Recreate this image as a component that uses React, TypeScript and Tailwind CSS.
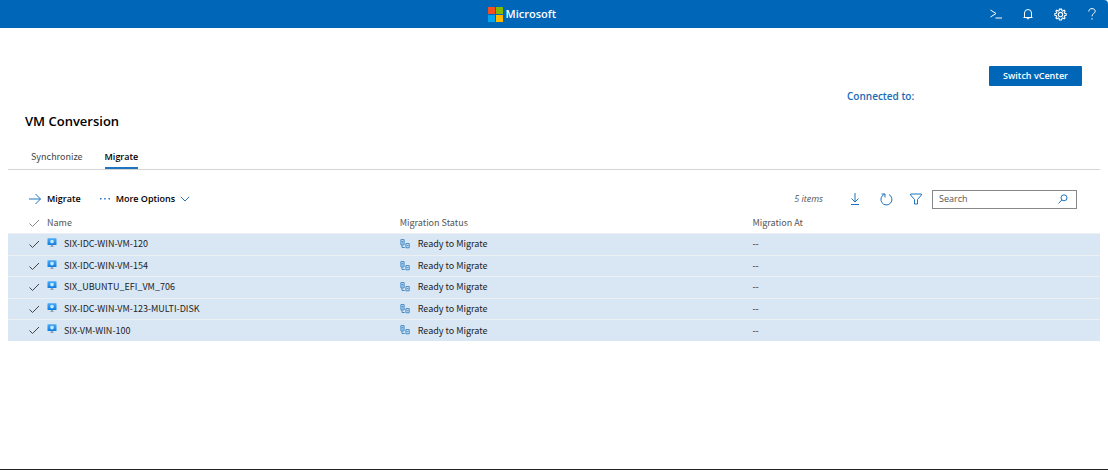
import { useState } from 'react';
import type { ReactNode } from 'react';

const machines = [
  'SIX-IDC-WIN-VM-120',
  'SIX-IDC-WIN-VM-154',
  'SIX_UBUNTU_EFI_VM_706',
  'SIX-IDC-WIN-VM-123-MULTI-DISK',
  'SIX-VM-WIN-100',
];

function Line({ className, box = '0 0 16 16', width = 1, children }: { className: string; box?: string; width?: number; children: ReactNode }) {
  return (
    <svg viewBox={box} className={className} fill="none" stroke="currentColor" strokeWidth={width} aria-hidden="true">
      {children}
    </svg>
  );
}

function MicrosoftLogo() {
  return (
    <svg viewBox="0 0 15 15" className="size-[15px]" aria-hidden="true">
      <path fill="#f25022" d="M0 0h7v7H0z" />
      <path fill="#7fba00" d="M8 0h7v7H8z" />
      <path fill="#00a4ef" d="M0 8h7v7H0z" />
      <path fill="#ffb900" d="M8 8h7v7H8z" />
    </svg>
  );
}

function MachineIcon() {
  return (
    <svg viewBox="0 0 10 10" className="mb-[2px] size-[10px] shrink-0" aria-hidden="true">
      <defs>
        <linearGradient id="screen" x1="0" y1="1" x2="0" y2="0">
          <stop offset="0" stopColor="#0f7ee0" />
          <stop offset="1" stopColor="#4cabf5" />
        </linearGradient>
      </defs>
      <rect x="0.5" y="0.3" width="9" height="6.700" rx="0.5" fill="url(#screen)" />
      <path d="M5 1.700 6.700 2.600v1.900L5 5.500 3.300 4.500V2.600z" fill="#c9ecff" />
      <path d="M4 7h2l.2 1.400H7.200V9H2.800v-.6h1z" fill="#8fa3b5" />
    </svg>
  );
}

function StatusIcon() {
  return (
    <Line className="size-[10px] shrink-0 text-[#4389c4]" box="0 0 10 10">
      <path d="M.9.600h3.200v5.300H.9zM1.600 2.400h1.800M1.600 4h1.800M2 6v2.500h2.700" />
      <path d="M5.900 4.600h3.300v4.200H5.900zM6.600 6.700h1.900" />
    </Line>
  );
}

function Tick({ label, checked, onChange, tone }: { label: string; checked: boolean; onChange: () => void; tone: string }) {
  return (
    <label className={`flex justify-start pl-5 ${tone}`}>
      <input type="checkbox" aria-label={label} checked={checked} onChange={onChange} className="peer sr-only" />
      <Line className="h-[10px] w-3 opacity-20 peer-checked:opacity-100" box="0 0 12 10">
        <path d="M1.500 5.500 4.500 8.500 11 2" />
      </Line>
    </label>
  );
}

function IconButton({ label, className, children }: { label: string; className: string; children: ReactNode }) {
  return (
    <button type="button" aria-label={label} className={`flex items-center justify-center ${className}`}>
      {children}
    </button>
  );
}

export default function App() {
  const [selected, setSelected] = useState<boolean[]>(machines.map(() => true));
  const all = selected.every(Boolean);

  return (
    <div className="flex min-h-screen flex-col border-b border-[#222] bg-white font-['Open_Sans',sans-serif] text-[9px] text-[#222]">
      <header className="flex h-7 items-center justify-between rounded-tr bg-[#0067b8] pl-[44%] text-white">
        <a href="#" className="flex items-center gap-[3px] text-[11px] font-semibold">
          <MicrosoftLogo />
          Microsoft
        </a>
        <nav className="flex" aria-label="Tools">
          <IconButton label="Cloud shell" className="h-7 w-8">
            <Line className="size-3" box="0 0 12 12">
              <path d="M.5 2 6 5.500.5 9M5.500 10h6.500" />
            </Line>
          </IconButton>
          <IconButton label="Notifications" className="h-7 w-8">
            <Line className="size-3" box="0 0 12 12">
              <path d="M1.500 9.500h9M2.500 9.500V5a3.500 3.500 0 0 1 7 0v4.500M4.800 9.700a1.200 1.200 0 0 0 2.400 0" />
            </Line>
          </IconButton>
          <IconButton label="Settings" className="h-7 w-8">
            <Line className="size-[13px]" box="0 0 24 24" width={2}>
              <path d="m10 2-.6 2.900-1.700.7L5.200 4 3.500 5.800 5.100 8.200l-.7 1.700L1.500 10.500v3l2.900.6.7 1.700-1.600 2.400L5.200 20l2.500-1.600 1.700.7L10 22h4l.6-2.900 1.700-.7 2.500 1.600 1.700-1.800-1.600-2.400.7-1.700 2.900-.6v-3l-2.900-.6-.7-1.700 1.600-2.400L18.800 4l-2.500 1.600-1.700-.7L14 2z" />
              <circle cx="12" cy="12" r="4" />
            </Line>
          </IconButton>
          <IconButton label="Help" className="h-7 w-8">
            <Line className="size-3" box="0 0 12 12">
              <path d="M2.800 3.500C2.800 1.500 4.200.6 6 .6s3.200 1 3.200 2.700C9.200 5.500 6 5.500 6 8.300M6 10.200v1.500" />
            </Line>
          </IconButton>
        </nav>
      </header>

      <main className="px-2">
        <div className="flex flex-col items-end pt-[38px] pr-[18px]">
          <button type="button" className="h-5 w-[93px] rounded-[1px] bg-[#0067b8] text-[9px] font-semibold text-white">
            Switch vCenter
          </button>
          <p className="mt-1 w-[235px] text-[10px] leading-3 font-semibold text-[#1a6bb5]">Connected to:</p>
        </div>

        <h1 className="mt-[9px] pl-[17px] text-[13px] leading-5 font-semibold text-black">VM Conversion</h1>

        <div role="tablist" className="mt-3 flex h-[27px] gap-[22px] border-b border-[#d4d4d4] pl-[23px]">
          <button type="button" role="tab" aria-selected="false" className="pt-[2px] font-['Noto_Sans_CJK_SC','Open_Sans',sans-serif] text-[#444]">Synchronize</button>
          <button type="button" role="tab" aria-selected="true" className="border-b-2 border-[#1f74bf] pt-1 font-semibold text-black">Migrate</button>
        </div>

        <div className="mt-[19px] flex h-5 items-center pr-[23px] pl-[21px] font-semibold text-black">
          <button type="button" className="flex items-center gap-[6px]">
            <Line className="size-3 text-[#1f74bf]" box="0 0 12 12">
              <path d="M0 6h11.500M6.500 1l5 5-5 5" />
            </Line>
            Migrate
          </button>
          <button type="button" aria-haspopup="menu" className="ml-[18px] flex items-center gap-[5px]">
            <svg viewBox="0 0 12 4" className="h-1 w-3 text-[#1f74bf]" fill="currentColor" aria-hidden="true">
              <path d="M1 1h1.500v1.500H1zM5.200 1h1.500v1.500H5.200zM9.500 1H11v1.500H9.500z" />
            </svg>
            More Options
            <Line className="h-[6px] w-[10px] text-[#1f74bf]" box="0 0 10 6">
              <path d="M.8.8 5 5 9.200.8" />
            </Line>
          </button>
          <span className="ml-auto font-normal text-[#555] italic">5 items</span>
          <IconButton label="Download" className="ml-[22px] h-5 w-5 text-[#1f74bf]">
            <Line className="size-3" box="0 0 12 12">
              <path d="M6 0v9M2.500 5.500 6 9l3.500-3.500M2 11.500h8" />
            </Line>
          </IconButton>
          <IconButton label="Refresh" className="ml-[11px] h-5 w-5 text-[#1f74bf]">
            <Line className="size-[13px]" box="0 0 13 13">
              <path d="M9 1.600a5.500 5.500 0 1 1-4.500-.3M1.500 1h3.500v3.500" />
            </Line>
          </IconButton>
          <IconButton label="Filter" className="ml-[10px] h-5 w-5 text-[#1f74bf]">
            <Line className="size-3" box="0 0 12 12">
              <path d="M.6 1h10.800v1L7.500 6.500V11h-3V6.500L.6 2z" />
            </Line>
          </IconButton>
          <label className="ml-[6px] flex h-[19px] w-[145px] items-center border border-[#888] bg-white pr-2 pl-[6px]">
            <input type="search" aria-label="Search" placeholder="Search" className="w-full min-w-0 font-normal text-[#333] outline-none placeholder:text-[#555]" />
            <Line className="size-[10px] shrink-0 text-[#1f74bf]" box="0 0 10 10">
              <circle cx="6" cy="3.800" r="3" />
              <path d="M3.800 6 .5 9.500" />
            </Line>
          </label>
        </div>

        <table className="mt-1 w-full table-fixed border-collapse text-left font-['Noto_Sans_CJK_SC','Open_Sans',sans-serif]">
          <colgroup>
            <col className="w-[39px]" />
            <col className="w-[32.3%]" />
            <col className="w-[32.3%]" />
            <col />
          </colgroup>
          <thead className="text-[#555]">
            <tr className="h-5">
              <th className="p-0">
                <Tick label="Select all" checked={all} onChange={() => setSelected(machines.map(() => !all))} tone="text-[#888]" />
              </th>
              <th className="p-0 font-normal">Name</th>
              <th className="p-0 font-normal">Migration Status</th>
              <th className="p-0 font-normal">Migration At</th>
            </tr>
          </thead>
          <tbody>
            {machines.map((name, i) => (
              <tr key={name} className={`border-t border-[#ecf0f3] odd:h-[22px] even:h-[21px] ${selected[i] ? 'bg-[#d9e7f5]' : 'bg-white'}`}>
                <td className="p-0">
                  <Tick
                    label={`Select ${name}`}
                    checked={selected[i]}
                    onChange={() => setSelected(selected.map((value, j) => (j === i ? !value : value)))}
                    tone="text-[#444]"
                  />
                </td>
                <td className="p-0">
                  <span className="flex items-center gap-[7px]">
                    <MachineIcon />
                    {name}
                  </span>
                </td>
                <td className="p-0">
                  <span className="flex items-center gap-2">
                    <StatusIcon />
                    Ready to Migrate
                  </span>
                </td>
                <td className="p-0">--</td>
              </tr>
            ))}
          </tbody>
        </table>
      </main>
    </div>
  );
}
